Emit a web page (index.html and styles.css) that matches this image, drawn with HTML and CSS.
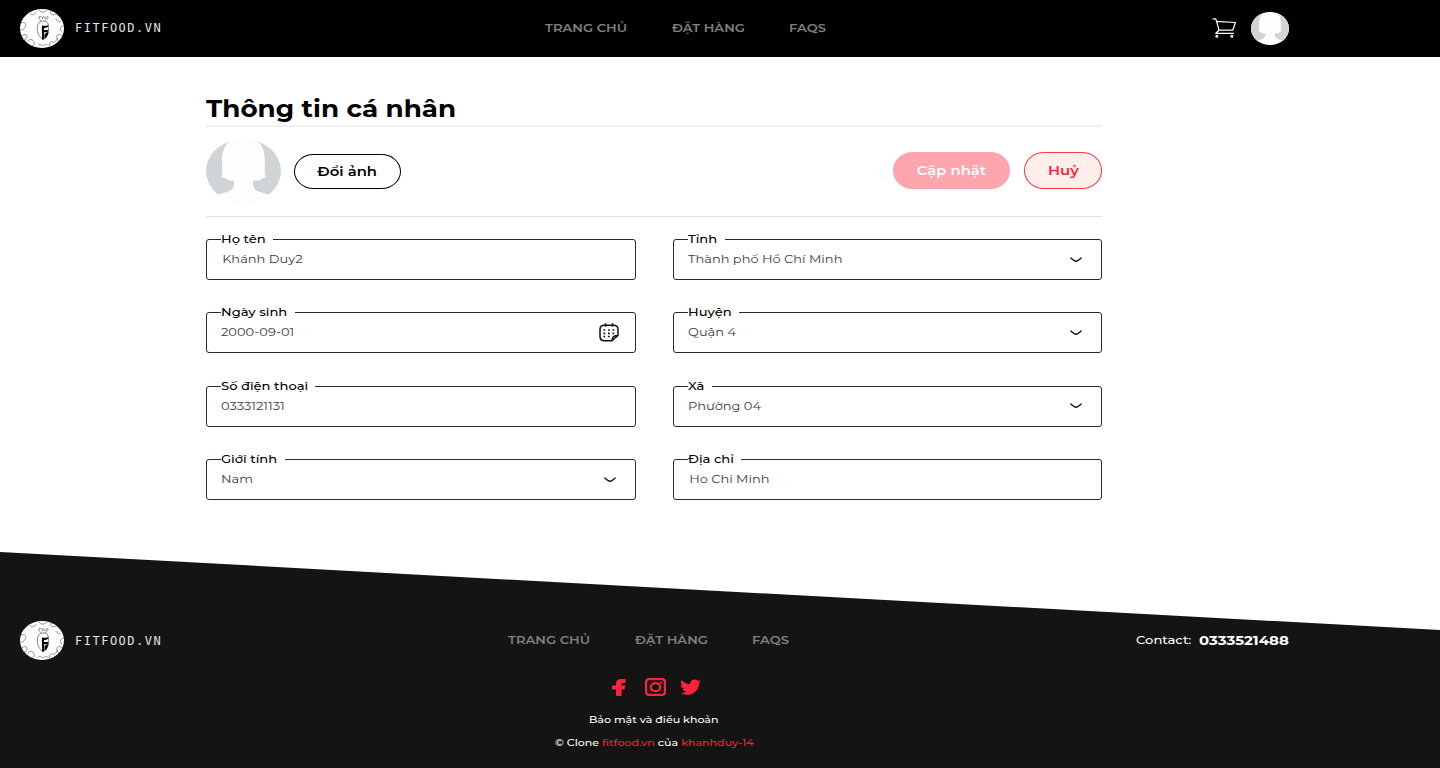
FILE: index.html
```html
<!DOCTYPE html>
<html lang="vi">
<head>
<meta charset="utf-8">
<title>Thông tin cá nhân</title>
<link rel="stylesheet" href="styles.css">
</head>
<body>
<svg class="defs" aria-hidden="true">
  <symbol id="logo" viewBox="0 0 44 39">
    <ellipse cx="22" cy="19.5" rx="22" ry="19.5" fill="#fff"/>
    <g fill="none" stroke="#777" stroke-width=".8">
      <path d="M10 3.500c0 3 5 3 6-.5M19 .5c0 3.500 7 3.500 8 0M31 2c-2 3 2 5 5 3M1 14c4-2 6 2 4 4-1 3-3 3-5 3M2 27c3-3 6-1 5 1.500s-2 2-4 2M8 33c1-4 5-3 6 0s-1 3-2 4M18 36.500c2-2 4 0 5 0s4-2 5 0M30 37c-2-3 1-5 3-4s4-2 4-4M36 10c1 3 4 3 5 2M44 17c-4 0-5 4-2 6M42 27c-3-3-6-1-5 2s2 3 3 2"/>
      <path stroke="#666" d="M21 11.800c-1-2-3-2-2-4 2-1 3 0 3.500 2 0-3 2.500-3 2.500 0 1-2 4-3 3-1s-2 2-3 3M19 13.500c2-2 6.500-2 8.500 0 2.500 5 1 14-4.500 17.500-5.500-4-7.500-12-4-17.500z"/>
    </g>
    <path fill="#000" d="M22 16.500c2.500.5 4.500.5 6.500-.5 0 2-1.500 3-4.500 3v2c2 .2 3 .2 4.500-.3 0 2-1.500 2.800-4.500 2.500V30l-2 .5c.5-5-.5-9 0-14zM24.500 25l4-2.500c-.2 3.500-1.700 6-4 7.500z"/>
  </symbol>
  <symbol id="avatar" viewBox="0 0 75 64" preserveAspectRatio="none">
    <rect width="75" height="64" fill="#fdfdfd"/>
    <path fill="#d0d4d7" d="M0 0h27C18 5 16 13 16 24c0 5 1 9-.5 14.500l5 1 1.500 2h6c1 8-3 11-9 12l-7 2L0 50zM75 0H48c9 5 11 13 11 24 0 5-1 9 .5 14.500l-4 1-1.500 2h-7c-1 8 3 11 9 12l7 2L75 50z"/>
  </symbol>
  <symbol id="chevron" viewBox="0 0 12 6"><path d="M.9 1C3 2.800 4.500 4.200 6 4.200S9 2.800 11.100 1" fill="none" stroke="#111" stroke-width="1.400" stroke-linecap="round"/></symbol>
</svg>

<header class="topbar">
  <a class="brand"><svg class="brand-mark"><use href="#logo"/></svg><span class="brand-name">FITFOOD.VN</span></a>
  <nav class="nav">
    <a>TRANG CHỦ</a><a>ĐẶT HÀNG</a><a>FAQS</a>
  </nav>
  <div class="account">
    <svg class="cart" viewBox="0 0 25 20" fill="none" stroke="#fff" stroke-width="1.200" stroke-linejoin="round" stroke-linecap="round">
      <path d="M1 .8h2.500l1 2.200L7 12.200M4.500 3.300l19 1.200-2.800 7.700M7 12.200h13.700M7 12.200l-3.200 3.100H21.500"/>
      <circle cx="4.800" cy="18.300" r=".9"/><circle cx="19.800" cy="18.300" r=".9"/>
    </svg>
    <svg class="avatar-small"><use href="#avatar"/></svg>
  </div>
</header>

<main class="profile">
  <h1 class="title"><span>Thông tin cá nhân</span></h1>
  <section class="actions">
    <svg class="avatar"><use href="#avatar"/></svg>
    <button class="btn btn-photo"><span>Đổi ảnh</span></button>
    <button class="btn btn-save"><span>Cập nhật</span></button>
    <button class="btn btn-cancel"><span>Huỷ</span></button>
  </section>
  <form class="form">
    <div class="field"><label class="w-name"><span>Họ tên</span></label><span class="value inset">Khánh Duy2</span></div>
    <div class="field"><label class="w-city"><span>Tỉnh</span></label><span class="value">Thành phố Hồ Chí Minh</span><svg class="chevron"><use href="#chevron"/></svg></div>
    <div class="field"><label class="w-birth"><span>Ngày sinh</span></label><span class="value">2000-09-01</span>
      <svg class="calendar" viewBox="0 0 20 19" fill="none" stroke="#111" stroke-width="1.500">
        <path d="M13 17.700H5.500Q1 17.700 1 13.500V6.500Q1 2.300 5.500 2.300h9Q19 2.300 19 6.500V12.500L13 17.700Q13 12.500 19 12.500M6.500.3v3.500M13.500.3v3.500" stroke-linejoin="round"/>
        <path d="M4.500 7h12M4.500 10.300h12M4.500 13.500h8" stroke-width="1.700" stroke-dasharray="1.700 2.800"/>
      </svg></div>
    <div class="field"><label class="w-district"><span>Huyện</span></label><span class="value">Quận 4</span><svg class="chevron"><use href="#chevron"/></svg></div>
    <div class="field"><label class="w-phone"><span>Số điện thoại</span></label><span class="value">0333121131</span></div>
    <div class="field"><label class="w-ward"><span>Xã</span></label><span class="value">Phường 04</span><svg class="chevron"><use href="#chevron"/></svg></div>
    <div class="field"><label class="w-gender"><span>Giới tính</span></label><span class="value">Nam</span><svg class="chevron"><use href="#chevron"/></svg></div>
    <div class="field"><label class="w-address"><span>Địa chỉ</span></label><span class="value inset">Ho Chi Minh</span></div>
  </form>
</main>

<footer class="footer">
  <div class="footer-row">
    <a class="brand"><svg class="brand-mark"><use href="#logo"/></svg><span class="brand-name">FITFOOD.VN</span></a>
    <nav class="nav">
      <a>TRANG CHỦ</a><a>ĐẶT HÀNG</a><a>FAQS</a>
    </nav>
    <div class="contact"><span class="contact-label">Contact:</span><strong>0333521488</strong></div>
  </div>
  <div class="social">
    <svg class="fb" viewBox="0 0 14 17"><path fill="#ff2338" d="M4 17V10.500H0V6.500H4V4.500C4 1.500 6 0 9 0H13.500V4H10.500Q9.500 4 9.500 5V6.500H13.500L12.500 10.500H9.500V17Z"/></svg>
    <svg class="ig" viewBox="0 0 21 18" fill="none" stroke="#ff2338" stroke-width="2.200"><rect x="1.100" y="1.100" width="18.800" height="15.800" rx="3"/><ellipse cx="10.500" cy="9.200" rx="4.700" ry="4"/><circle cx="16" cy="4.600" r="1.200" fill="#ff2338" stroke="none"/></svg>
    <svg class="tw" viewBox="0 1.500 24 20.500" preserveAspectRatio="none"><path fill="#ff2338" d="M23.950 4.570a10 10 0 0 1-2.820.77 4.960 4.960 0 0 0 2.160-2.720c-.95.550-2 .95-3.130 1.180a4.920 4.920 0 0 0-8.380 4.480C7.690 8.090 4.070 6.130 1.640 3.160a4.820 4.820 0 0 0-.67 2.480c0 1.710.87 3.210 2.190 4.100a4.900 4.900 0 0 1-2.230-.620v.060a4.920 4.920 0 0 0 3.950 4.830 5 5 0 0 1-2.210.080 4.940 4.940 0 0 0 4.600 3.420A9.870 9.870 0 0 1 0 19.540a13.990 13.990 0 0 0 7.550 2.210c9.050 0 14-7.500 14-13.980 0-.21 0-.42-.020-.63a9.940 9.940 0 0 0 2.460-2.550z"/></svg>
  </div>
  <p class="terms"><span>Bảo mật và điều khoản</span></p>
  <p class="copyright"><span>© Clone <a>fitfood.vn</a> của <a>khanhduy-14</a></span></p>
</footer>
</body>
</html>
```
FILE: styles.css
```css
* { box-sizing: border-box; }
body {
  margin: 0;
  width: 1440px;
  height: 768px;
  overflow: hidden;
  display: flex;
  flex-direction: column;
  background: #fff;
  color: #000;
  font-family: Montserrat, Inter, "Noto Sans", sans-serif;
  font-size: 11.5px;
}
.defs { display: none; }
svg { display: block; flex: none; }

/* Wide lettering */
.nav a, .title span, .btn span, .field label span, .value,
.contact span, .contact strong, .terms span, .copyright > span {
  display: inline-block;
  white-space: nowrap;
  transform: scaleX(1.14);
  transform-origin: left center;
}

.topbar {
  flex: none;
  display: flex;
  align-items: center;
  height: 57px;
  padding: 0 0 1px 20px;
  background: #000;
}
.brand { display: flex; align-items: center; gap: 11px; width: 142px; }
.brand-mark { width: 44px; height: 39px; }
.brand-name {
  font: 12px/16px "DejaVu Sans Mono", monospace;
  letter-spacing: 1.5px;
  color: #e2e2e2;
}
.nav {
  display: grid;
  grid-template-columns: 82px 72px 37px;
  gap: 45px;
  margin-left: 383px;
  color: #808080;
  font-size: 11.5px;
  font-weight: 600;
}
.account { display: flex; align-items: center; gap: 14px; margin-left: 386px; }
.cart { width: 25px; height: 20px; }
.avatar-small { width: 38px; height: 33px; border-radius: 50%; }

.profile { width: 896px; margin-left: 206px; padding-top: 37px; }
.title {
  height: 33px;
  margin: 0;
  border-bottom: 2px solid #f0f0f0;
  font-size: 23px;
  line-height: 30px;
  font-weight: 700;
}
.actions {
  display: flex;
  align-items: center;
  height: 90px;
  padding-bottom: 2px;
  border-bottom: 1px solid #e2e2e2;
}
.avatar { width: 75px; height: 64px; border-radius: 50%; }
.btn {
  height: 37px;
  padding: 0 0 1px;
  border: 1px solid #000;
  border-radius: 20px / 18px;
  background: #fff;
  font: 600 13px/18px Montserrat, Inter, sans-serif;
}
.btn span { transform-origin: center; }
.btn-photo { width: 107px; height: 35px; margin: 1px 0 0 13px; }
.btn-save { width: 117px; margin-left: auto; border-color: #ffa5ad; background: #ffa5ad; color: #fff; }
.btn-cancel { width: 78px; margin-left: 14px; border-color: #f63b4d; background: #ffeeea; color: #fa1e32; }

.form {
  display: grid;
  grid-template-columns: 430px 429px;
  column-gap: 37px;
  row-gap: 32.400px;
  padding-top: 22px;
}
.field {
  position: relative;
  display: flex;
  align-items: center;
  height: 41px;
  padding: 0 19px 0 14px;
  border: 1px solid #2a2a2a;
  border-radius: 3px;
}
.field label {
  position: absolute;
  left: 14px;
  top: -9px;
  height: 16px;
  line-height: 16px;
  background: #fff;
  font-size: 11.500px;
  font-weight: 500;
}
.w-name { width: 52px; }
.w-city { width: 37px; }
.w-birth { width: 74px; }
.w-district { width: 51px; }
.w-phone { width: 94px; }
.w-ward { width: 24px; }
.w-gender { width: 64px; }
.w-address { width: 53px; }
.value { flex: 1; color: #3c3c3c; font-size: 11.400px; line-height: 15px; }
.inset { text-indent: 1px; }
.chevron { width: 12px; height: 6px; }
.calendar { width: 20px; height: 19px; margin-right: -3px; }

.footer {
  flex: none;
  height: 217px;
  margin-top: auto;
  padding-top: 70px;
  background: #141414;
  clip-path: polygon(0 1px, 100% 79px, 100% 100%, 0 100%);
  color: #fff;
}
.footer-row { display: flex; align-items: center; height: 39px; padding-left: 20px; }
.footer .nav, .contact { padding-bottom: 1px; }
.footer .nav { margin-left: 346px; }
.contact { display: flex; align-items: center; margin-left: 347px; }
.contact-label { width: 63px; font-weight: 500; }
.contact strong { font-size: 13.100px; }
.social { display: flex; align-items: center; height: 18px; margin: 18px 0 0 612px; }
.fb { width: 14px; height: 17px; margin-right: 19px; }
.ig { width: 21px; height: 18px; margin-right: 14px; }
.tw { width: 21px; height: 16px; }
.terms, .copyright { margin: 0; font-size: 9.700px; line-height: 16px; font-weight: 500; }
.terms { padding: 16px 0 0 589px; }
.copyright { padding: 7px 0 0 555px; }
.copyright a { color: #f5222d; }
```
